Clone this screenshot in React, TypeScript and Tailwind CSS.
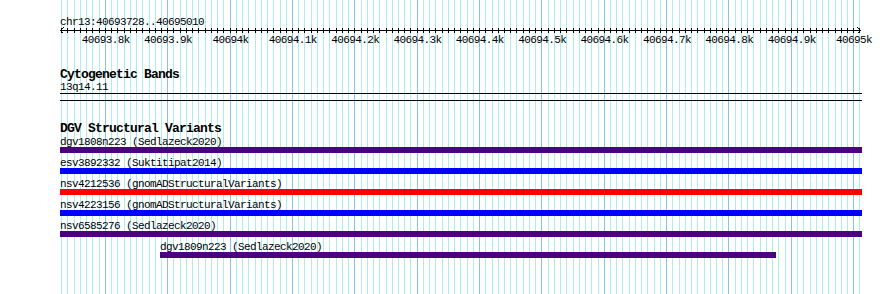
const START = 40693728
const END = 40695010
const X0 = 60
const SCALE = 0.6236

const xOf = (bp: number) => X0 + (bp - START) * SCALE

const minorLines: number[] = []
for (let bp = 40693730; bp <= END; bp += 10) minorLines.push(bp)

const majorTicks: number[] = []
for (let bp = 40693800; bp <= 40695000; bp += 100) majorTicks.push(bp)

const tickLabel = (bp: number) =>
  bp % 1000 === 0 ? `${bp / 1000}k` : `${(bp / 1000).toFixed(1)}k`

const variants = [
  { name: "dgv1808n223 (Sedlazeck2020)", color: "bg-[#4b0082]", from: 60, to: 862 },
  { name: "esv3892332 (Suktitipat2014)", color: "bg-[#0000ff]", from: 60, to: 862 },
  { name: "nsv4212536 (gnomADStructuralVariants)", color: "bg-[#ff0000]", from: 60, to: 862 },
  { name: "nsv4223156 (gnomADStructuralVariants)", color: "bg-[#0000ff]", from: 60, to: 862 },
  { name: "nsv6585276 (Sedlazeck2020)", color: "bg-[#4b0082]", from: 60, to: 862 },
  { name: "dgv1809n223 (Sedlazeck2020)", color: "bg-[#4b0082]", from: 160, to: 776 },
]

function Grid() {
  return (
    <svg
      className="absolute inset-0 pointer-events-none"
      width={890}
      height={294}
      shapeRendering="crispEdges"
    >
      {minorLines.map((bp) => (
        <rect
          key={bp}
          x={Math.round(xOf(bp))}
          y={0}
          width={1}
          height={294}
          fill={bp % 100 === 0 ? "#82c4ec" : "#aaeef0"}
        />
      ))}
    </svg>
  )
}

function Ruler() {
  return (
    <svg width={802} height={20} className="block overflow-visible" shapeRendering="crispEdges">
      <rect x={0} y={3} width={801} height={1} fill="#000" />
      {minorLines.map((bp) => (
        <rect key={bp} x={Math.round(xOf(bp)) - X0} y={1} width={1} height={5} fill="#000" />
      ))}
      <path d="M3.5 0.5 L0.5 3.5 L3.5 6.5" stroke="#000" fill="none" />
      <path d="M797.5 0.5 L800.5 3.5 L797.5 6.5" stroke="#000" fill="none" />
      {majorTicks.map((bp) => (
        <text
          key={bp}
          x={xOf(bp) - X0 + 0.8}
          y={16}
          textAnchor="middle"
          fontFamily="'Liberation Mono', monospace"
          fontSize={11}
          letterSpacing={-0.6}
          fill="#000"
        >
          {tickLabel(bp)}
        </text>
      ))}
    </svg>
  )
}

export default function App() {
  return (
    <div className="relative w-[890px] h-[294px] bg-white overflow-hidden font-['Liberation_Mono',monospace] text-black">
      <Grid />

      <div className="relative flex flex-col pl-[60px] pt-[17px]">
        <div className="h-[10px] text-[11px] leading-[10px] tracking-[-0.6px] whitespace-nowrap">
          chr13:40693728..40695010
        </div>
        <Ruler />

        {/* Cytogenetic bands */}
        <div className="mt-[21px] h-[13px] text-[13px] leading-[13px] font-bold tracking-[-0.8px] whitespace-nowrap">
          Cytogenetic Bands
        </div>
        <div className="mt-[1px] h-[10px] text-[11px] leading-[10px] tracking-[-0.6px] whitespace-nowrap">
          13q14.11
        </div>
        <div className="mt-[1px] w-[802px] h-[8px] border-y border-black" />

        {/* DGV */}
        <div className="mt-[21px] h-[13px] text-[13px] leading-[13px] font-bold tracking-[-0.8px] whitespace-nowrap">
          DGV Structural Variants
        </div>
        <div className="mt-[2px] flex flex-col gap-[5px]">
          {variants.map((v) => (
            <div key={v.name} className="flex flex-col" style={{ marginLeft: v.from - X0 }}>
              <div className="h-[10px] text-[11px] leading-[10px] tracking-[-0.6px] whitespace-nowrap">
                {v.name}
              </div>
              <div className={`h-[6px] ${v.color}`} style={{ width: v.to - v.from }} />
            </div>
          ))}
        </div>
      </div>
    </div>
  )
}
